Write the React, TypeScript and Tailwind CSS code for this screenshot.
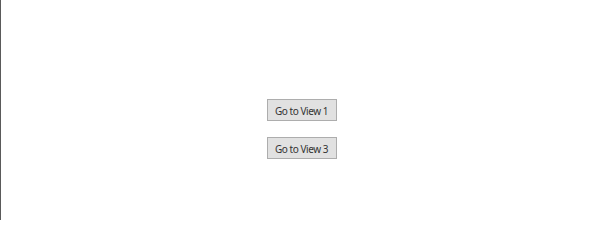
import React from "react";

export default function App() {
  return (
    <div className="w-[602px] h-[220px] bg-white border-l border-[#5a5a5a] flex flex-col items-center pt-[99px] gap-4 box-border font-['Noto_Sans',sans-serif]">
      <button className="w-[70px] h-[22px] p-0 pt-[2px] bg-[#e1e1e1] border border-[#adadad] text-[10px] tracking-[-0.45px] leading-none text-[#333] whitespace-nowrap flex items-center justify-center">
        Go to View 1
      </button>
      <button className="w-[70px] h-[22px] p-0 pt-[2px] bg-[#e1e1e1] border border-[#adadad] text-[10px] tracking-[-0.45px] leading-none text-[#333] whitespace-nowrap flex items-center justify-center">
        Go to View 3
      </button>
    </div>
  );
}
